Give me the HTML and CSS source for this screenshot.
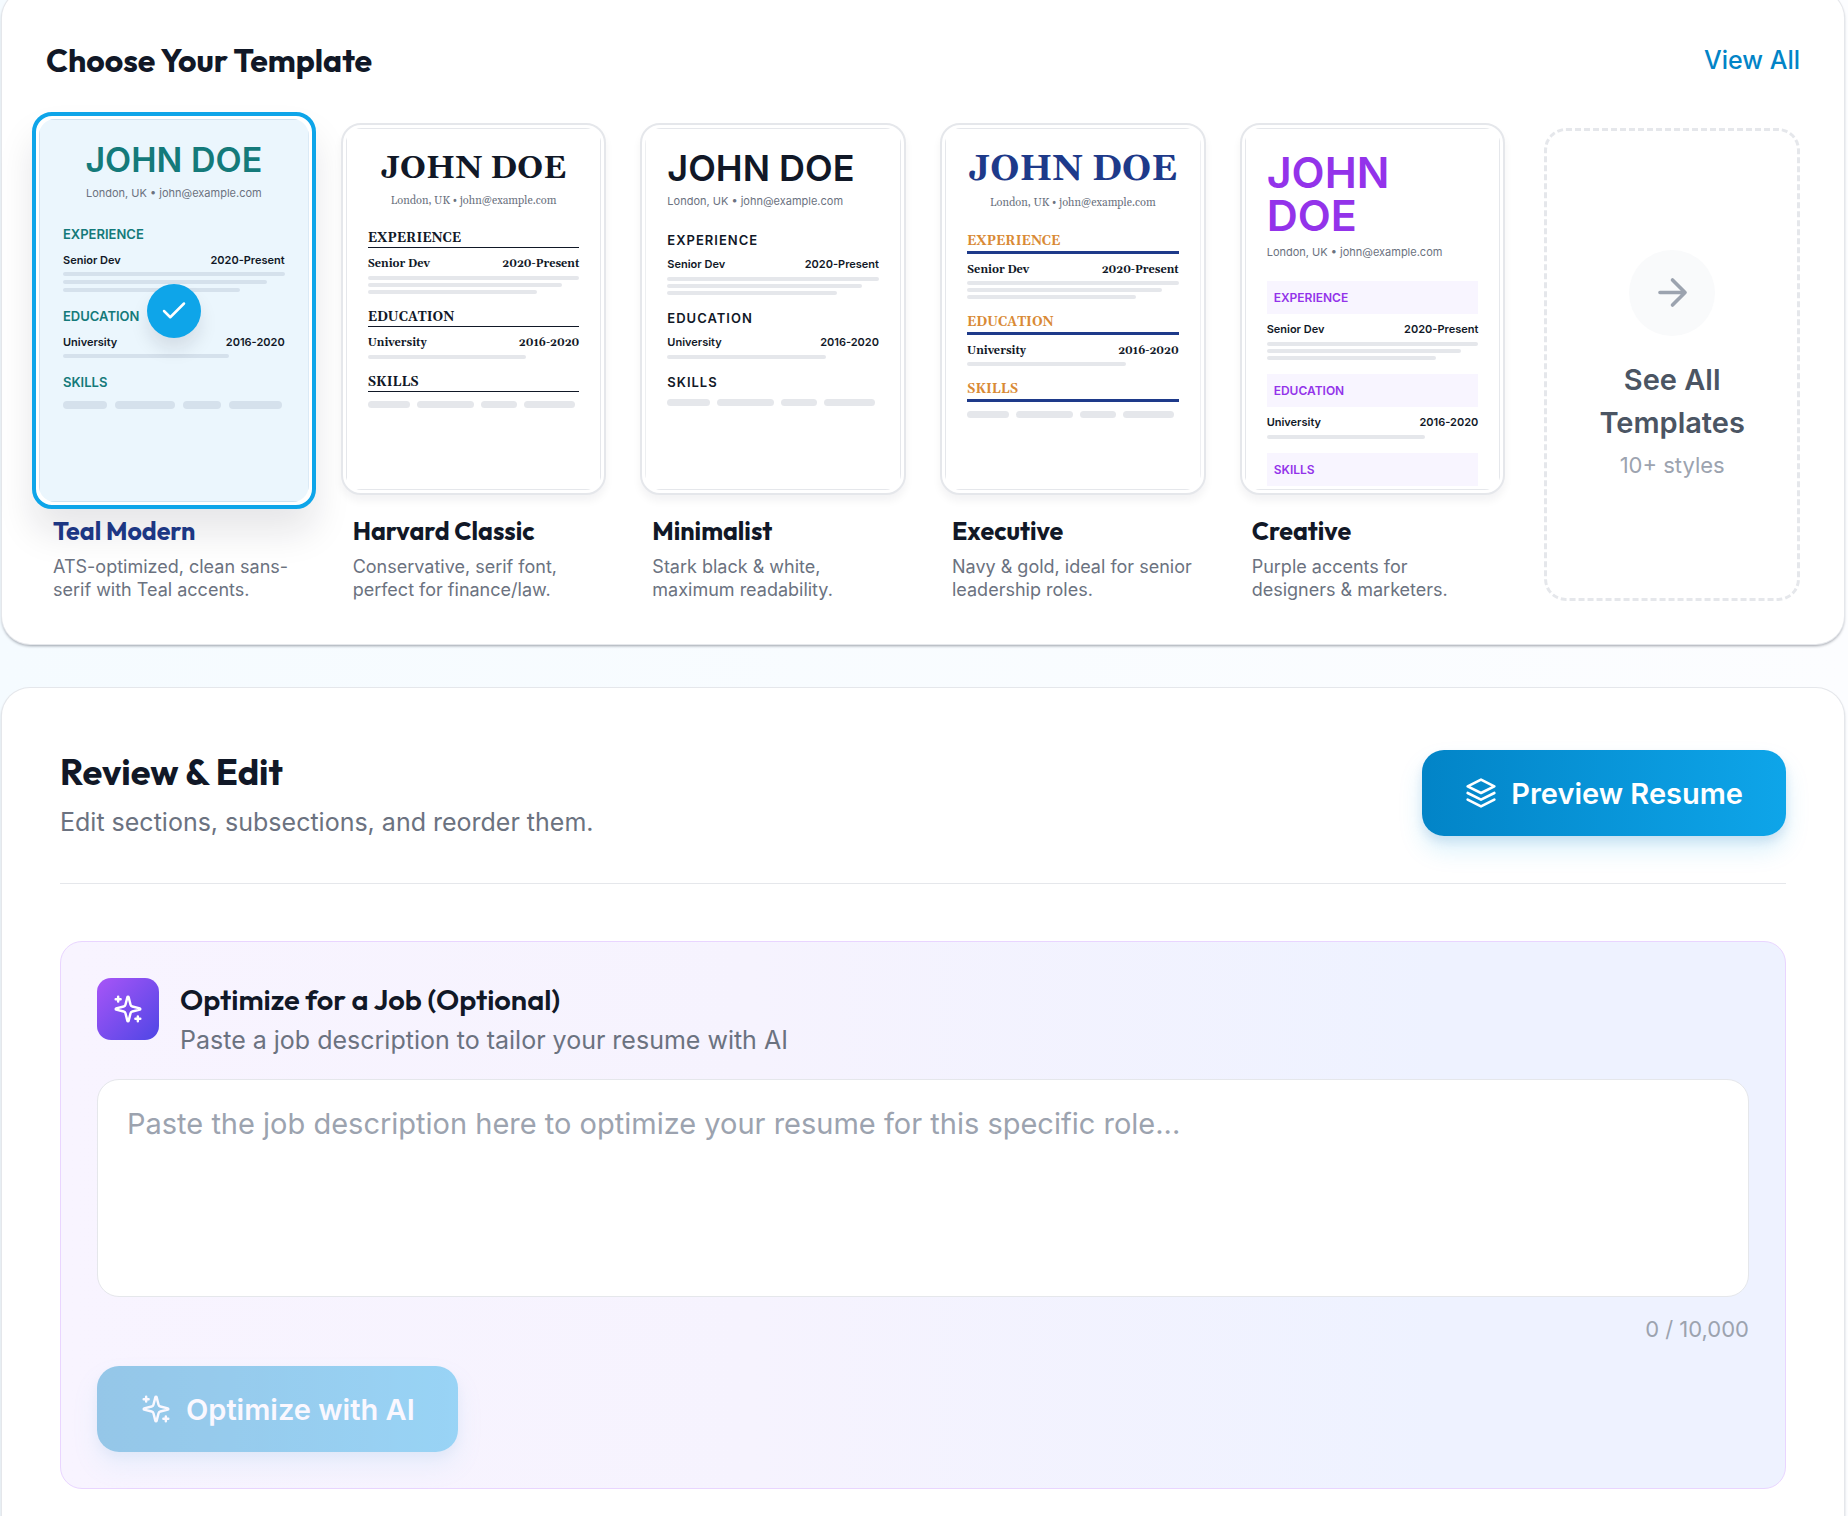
FILE: index.html
```html
<!DOCTYPE html>
<html lang="en">
<head>
<meta charset="utf-8">
<meta name="viewport" content="width=device-width, initial-scale=1">
<title>Resume Builder</title>
<link rel="stylesheet" href="styles.css">
</head>
<body>
<main class="page">
  <section class="panel templates">
    <header class="templates-head">
      <h2 class="templates-title">Choose Your Template</h2>
      <a class="view-all" href="#templates">View All</a>
    </header>
    <div class="template-grid">
      <article class="template template-selected">
        <button class="thumb thumb-teal" type="button" aria-label="Teal Modern" aria-pressed="true">
          <span class="sheet">
            <span class="name">JOHN DOE</span>
            <span class="contact">London, UK • john@example.com</span>
            <span class="label">EXPERIENCE</span>
            <span class="entry"><span>Senior Dev</span><span>2020-Present</span></span>
            <span class="bars"><span class="bar"></span><span class="bar bar-mid"></span><span class="bar bar-short"></span></span>
            <span class="label">EDUCATION</span>
            <span class="entry"><span>University</span><span>2016-2020</span></span>
            <span class="bars"><span class="bar bar-edu"></span></span>
            <span class="label">SKILLS</span>
            <span class="chips"><span class="chip chip-a"></span><span class="chip chip-b"></span><span class="chip chip-c"></span><span class="chip chip-d"></span></span>
          </span>
          <span class="check">
            <svg viewBox="0 0 24 24" width="30" height="30" fill="none" stroke="currentColor" stroke-width="2" stroke-linecap="round" stroke-linejoin="round"><path d="M20 6 9 17l-5-5"/></svg>
          </span>
        </button>
        <h3 class="template-name">Teal Modern</h3>
        <p class="template-desc">ATS-optimized, clean sans-serif with Teal accents.</p>
      </article>

      <article class="template">
        <button class="thumb thumb-harvard" type="button" aria-label="Harvard Classic">
          <span class="sheet">
            <span class="name">JOHN DOE</span>
            <span class="contact">London, UK • john@example.com</span>
            <span class="label">EXPERIENCE</span>
            <span class="entry"><span>Senior Dev</span><span>2020-Present</span></span>
            <span class="bars"><span class="bar"></span><span class="bar bar-mid"></span><span class="bar bar-short"></span></span>
            <span class="label">EDUCATION</span>
            <span class="entry"><span>University</span><span>2016-2020</span></span>
            <span class="bars"><span class="bar bar-edu"></span></span>
            <span class="label">SKILLS</span>
            <span class="chips"><span class="chip chip-a"></span><span class="chip chip-b"></span><span class="chip chip-c"></span><span class="chip chip-d"></span></span>
          </span>
        </button>
        <h3 class="template-name">Harvard Classic</h3>
        <p class="template-desc">Conservative, serif font, perfect for finance/law.</p>
      </article>

      <article class="template">
        <button class="thumb thumb-minimal" type="button" aria-label="Minimalist">
          <span class="sheet">
            <span class="name">JOHN DOE</span>
            <span class="contact">London, UK • john@example.com</span>
            <span class="label">EXPERIENCE</span>
            <span class="entry"><span>Senior Dev</span><span>2020-Present</span></span>
            <span class="bars"><span class="bar"></span><span class="bar bar-mid"></span><span class="bar bar-short"></span></span>
            <span class="label">EDUCATION</span>
            <span class="entry"><span>University</span><span>2016-2020</span></span>
            <span class="bars"><span class="bar bar-edu"></span></span>
            <span class="label">SKILLS</span>
            <span class="chips"><span class="chip chip-a"></span><span class="chip chip-b"></span><span class="chip chip-c"></span><span class="chip chip-d"></span></span>
          </span>
        </button>
        <h3 class="template-name">Minimalist</h3>
        <p class="template-desc">Stark black &amp; white, maximum readability.</p>
      </article>

      <article class="template">
        <button class="thumb thumb-executive" type="button" aria-label="Executive">
          <span class="sheet">
            <span class="name">JOHN DOE</span>
            <span class="contact">London, UK • john@example.com</span>
            <span class="label">EXPERIENCE</span>
            <span class="entry"><span>Senior Dev</span><span>2020-Present</span></span>
            <span class="bars"><span class="bar"></span><span class="bar bar-mid"></span><span class="bar bar-short"></span></span>
            <span class="label">EDUCATION</span>
            <span class="entry"><span>University</span><span>2016-2020</span></span>
            <span class="bars"><span class="bar bar-edu"></span></span>
            <span class="label">SKILLS</span>
            <span class="chips"><span class="chip chip-a"></span><span class="chip chip-b"></span><span class="chip chip-c"></span><span class="chip chip-d"></span></span>
          </span>
        </button>
        <h3 class="template-name">Executive</h3>
        <p class="template-desc">Navy &amp; gold, ideal for senior leadership roles.</p>
      </article>

      <article class="template">
        <button class="thumb thumb-creative" type="button" aria-label="Creative">
          <span class="sheet">
            <span class="name">JOHN<br>DOE</span>
            <span class="contact">London, UK • john@example.com</span>
            <span class="label">EXPERIENCE</span>
            <span class="entry"><span>Senior Dev</span><span>2020-Present</span></span>
            <span class="bars"><span class="bar"></span><span class="bar bar-mid"></span><span class="bar bar-short"></span></span>
            <span class="label">EDUCATION</span>
            <span class="entry"><span>University</span><span>2016-2020</span></span>
            <span class="bars"><span class="bar bar-edu"></span></span>
            <span class="label">SKILLS</span>
          </span>
        </button>
        <h3 class="template-name">Creative</h3>
        <p class="template-desc">Purple accents for designers &amp; marketers.</p>
      </article>

      <button class="see-all" type="button">
        <span class="see-all-icon">
          <svg viewBox="0 0 24 24" width="43" height="43" fill="none" stroke="currentColor" stroke-width="2" stroke-linecap="round" stroke-linejoin="round"><path d="M5 12h14M12 5l7 7-7 7"/></svg>
        </span>
        <span class="see-all-title">See All Templates</span>
        <span class="see-all-note">10+ styles</span>
      </button>
    </div>
  </section>

  <section class="panel review">
    <header class="review-head">
      <div class="review-heading">
        <h2 class="review-title">Review &amp; Edit</h2>
        <p class="review-sub">Edit sections, subsections, and reorder them.</p>
      </div>
      <button class="btn" type="button">
        <svg viewBox="0 0 24 24" width="32" height="32" fill="none" stroke="currentColor" stroke-width="2" stroke-linecap="round" stroke-linejoin="round"><path d="M12 2 2 7l10 5 10-5-10-5z"/><path d="M2 12l10 5 10-5"/><path d="M2 17l10 5 10-5"/></svg>
        Preview Resume
      </button>
    </header>
    <form class="optimize">
      <div class="optimize-head">
        <span class="optimize-icon">
          <svg viewBox="-1 -1 26 26" width="32" height="32" fill="none" stroke="currentColor" stroke-width="2" stroke-linecap="round" stroke-linejoin="round"><path d="M9.94 15.5A2 2 0 0 0 8.5 14.06l-6.14-1.58a.5.5 0 0 1 0-.96L8.5 9.94A2 2 0 0 0 9.94 8.5l1.58-6.14a.5.5 0 0 1 .96 0l1.58 6.14a2 2 0 0 0 1.44 1.44l6.14 1.58a.5.5 0 0 1 0 .96l-6.14 1.58a2 2 0 0 0-1.44 1.44l-1.58 6.14a.5.5 0 0 1-.96 0z"/><path d="M20 18v4M22 20h-4M4 2v4M2 4h4"/></svg>
        </span>
        <div>
          <h3 class="optimize-title"><label for="job">Optimize for a Job (Optional)</label></h3>
          <p class="optimize-sub">Paste a job description to tailor your resume with AI</p>
        </div>
      </div>
      <textarea class="job" id="job" maxlength="10000" placeholder="Paste the job description here to optimize your resume for this specific role..."></textarea>
      <p class="counter">0 / 10,000</p>
      <button class="btn" type="button" disabled>
        <svg viewBox="-1 -1 26 26" width="32" height="32" fill="none" stroke="currentColor" stroke-width="2" stroke-linecap="round" stroke-linejoin="round"><path d="M9.94 15.5A2 2 0 0 0 8.5 14.06l-6.14-1.58a.5.5 0 0 1 0-.96L8.5 9.94A2 2 0 0 0 9.94 8.5l1.58-6.14a.5.5 0 0 1 .96 0l1.58 6.14a2 2 0 0 0 1.44 1.44l6.14 1.58a.5.5 0 0 1 0 .96l-6.14 1.58a2 2 0 0 0-1.44 1.44l-1.58 6.14a.5.5 0 0 1-.96 0z"/><path d="M20 18v4M22 20h-4M4 2v4M2 4h4"/></svg>
        Optimize with AI
      </button>
    </form>
  </section>
</main>
</body>
</html>
```
FILE: styles.css
```css
* {
  box-sizing: border-box;
}

body {
  margin: 0;
  min-height: 100vh;
  font-family: Inter, "Liberation Sans", sans-serif;
  color: #111827;
  background: linear-gradient(90deg, #f5fbff, #fcfdff);
  overflow-x: hidden;
}

h2, h3, p {
  margin: 0;
}

button {
  font: inherit;
  cursor: pointer;
}

.page {
  display: flex;
  flex-direction: column;
  gap: 44px;
  padding: 0 4px 0 2px;
}

.panel {
  background: #fff;
  border-radius: 28px;
  box-shadow: 0 0 0 1px #e5e7eb, 0 2px 3px rgba(17, 24, 39, 0.4);
}

/* Template picker */
.templates {
  margin-top: -10px;
  padding: 45px 39px 43px;
}

.templates-head {
  display: flex;
  align-items: center;
  justify-content: space-between;
  padding: 0 5px;
  margin-bottom: 38px;
}

.templates-title,
.template-name,
.review-title,
.optimize-title {
  font-family: Outfit, Lato, "Open Sans", sans-serif;
  font-weight: 700;
}

.templates-title {
  font-size: 32px;
  line-height: 50px;
}

.view-all {
  font-size: 25px;
  font-weight: 500;
  line-height: 50px;
  color: #0284c7;
  text-decoration: none;
}

.template-grid {
  display: grid;
  grid-template-columns: repeat(6, minmax(0, 1fr));
  gap: 34px;
}

.template {
  display: flex;
  flex-direction: column;
}

.thumb {
  position: relative;
  display: block;
  width: 100%;
  height: 372px;
  padding: 3px;
  border: 2px solid #e5e7eb;
  border-radius: 20px;
  background: #fff;
  box-shadow: 0 6px 8px rgba(17, 24, 39, 0.05);
  text-align: left;
  color: #111827;
}

.sheet {
  display: flex;
  flex-direction: column;
  height: 100%;
  padding: 19px 21px 0;
  border: 1px solid #e5e7eb;
  clip-path: inset(0 round 16px);
  overflow: hidden;
  font-size: 11px;
}

.name {
  flex: none;
  font-size: 36px;
  font-weight: 600;
  line-height: 40px;
  white-space: nowrap;
}

.contact {
  flex: none;
  font-size: 11px;
  line-height: 14px;
  color: #6b7280;
  white-space: nowrap;
}

.label {
  flex: none;
  font-size: 12px;
  font-weight: 600;
  line-height: 16px;
}

.entry {
  flex: none;
  display: flex;
  justify-content: space-between;
  font-size: 11px;
  font-weight: 600;
  line-height: 14px;
  white-space: nowrap;
}

.bars {
  flex: none;
  display: grid;
  gap: 3px;
}

.bar {
  height: 4px;
  border-radius: 2px;
  background: #e5e7eb;
}

.bar-mid { width: 92%; }
.bar-short { width: 80%; }
.bar-edu { width: 75%; }

.chips {
  flex: none;
  display: flex;
  gap: 7px;
}

.chip {
  height: 7px;
  border-radius: 4px;
  background: #e5e7eb;
}

.chip-a { width: 20%; }
.chip-b { width: 27%; }
.chip-c { width: 17%; }
.chip-d { width: 24%; }

/* Teal Modern, shown selected */
.template-selected .thumb {
  width: auto;
  height: 397px;
  margin: -11px -9px -14px;
  border: 4px solid #0ea5e9;
  box-shadow: 0 24px 36px rgba(17, 24, 39, 0.1);
}

.template-selected .sheet {
  padding: 20px 23px 0;
  border-color: #cfe2f1;
  background: #ebf6fd;
}

.template-selected .bars {
  gap: 4px;
}

.template-selected .bar,
.template-selected .chip {
  background: #d5e1ec;
}

.template-selected .chips {
  gap: 8px;
}

.template-selected .chip {
  height: 8px;
}

.template-selected .template-name {
  color: #1e3a8a;
}

.thumb-teal .name {
  font-size: 34px;
  color: #147a7a;
  text-align: center;
}

.thumb-teal .contact {
  margin: 6px 0 26px;
  text-align: center;
}

.thumb-teal .label {
  margin-bottom: 11px;
  font-size: 13px;
  color: #147a7a;
}

.thumb-teal .bars {
  margin: 5px 0 16px;
}

.check {
  position: absolute;
  top: 50%;
  left: 50%;
  display: grid;
  place-items: center;
  width: 54px;
  height: 54px;
  margin: -27px 0 0 -27px;
  border-radius: 50%;
  background: #0ea5e9;
  color: #fff;
  box-shadow: 0 12px 18px rgba(17, 24, 39, 0.1);
}

/* Harvard Classic */
.thumb-harvard,
.thumb-executive {
  font-family: Gelasio, Georgia, "Liberation Serif", serif;
}

.thumb-harvard .name {
  margin-top: 1px;
  font-size: 32px;
  font-weight: 700;
  text-align: center;
}

.thumb-harvard .contact,
.thumb-executive .contact {
  margin: 5px 0 23px;
  font-size: 11px;
  text-align: center;
}

.thumb-harvard .label,
.thumb-executive .label {
  margin-bottom: 9px;
  padding-bottom: 2px;
  border-bottom: 1px solid #111827;
  font-size: 13px;
  font-weight: 700;
  line-height: 14px;
}

.thumb-harvard .entry,
.thumb-executive .entry {
  font-size: 11px;
  font-weight: 700;
}

.thumb-harvard .bars {
  margin: 5px 0 16px;
}

/* Minimalist */
.thumb-minimal .contact {
  margin: 6px 0 24px;
}

.thumb-minimal .label {
  margin-bottom: 9px;
  font-size: 13px;
  letter-spacing: 1px;
}

.thumb-minimal .bars {
  margin: 6px 0 15px;
}

/* Executive */
.thumb-executive .name {
  margin-top: 1px;
  font-weight: 700;
  line-height: 42px;
  color: #1e3a8a;
  text-align: center;
}

.thumb-executive .label {
  border-bottom: 3px solid #1e3a8a;
  line-height: 16px;
  color: #d98a35;
}

.thumb-executive .bars {
  margin: 4px 0 15px;
}

/* Creative */
.thumb-creative .name {
  margin-top: 3px;
  font-size: 43px;
  line-height: 43px;
  color: #9333ea;
}

.thumb-creative .contact {
  margin: 8px 0 22px;
}

.thumb-creative .label {
  margin-bottom: 8px;
  padding: 0 7px;
  line-height: 33px;
  background: #f8f5ff;
  color: #9333ea;
}

.thumb-creative .bars {
  margin: 6px 0 14px;
}

.template-name {
  margin-top: 20px;
  padding: 0 12px;
  font-size: 25px;
  line-height: 32px;
}

.template-desc {
  margin-top: 8px;
  padding: 0 12px;
  font-size: 18px;
  line-height: 23px;
  color: #6b7280;
}

.see-all {
  display: flex;
  flex-direction: column;
  align-items: center;
  justify-content: center;
  margin: 5px 5px 0;
  padding: 7px 40px 0;
  border: 3px dashed #e5e7eb;
  border-radius: 22px;
  background: none;
}

.see-all-icon {
  display: grid;
  place-items: center;
  width: 86px;
  height: 86px;
  margin-bottom: 22px;
  border-radius: 50%;
  background: #f9fafb;
  color: #9ca3af;
}

.see-all-title {
  font-size: 29px;
  font-weight: 600;
  line-height: 43px;
  color: #4b5563;
}

.see-all-note {
  font-size: 22px;
  line-height: 43px;
  color: #9ca3af;
}

/* Review and edit */
.review {
  padding: 62px 58px 64px;
}

.review-head {
  display: flex;
  align-items: flex-start;
  justify-content: space-between;
  padding-bottom: 43px;
  margin-bottom: 57px;
  border-bottom: 1px solid #e5e7eb;
}

.review-title {
  font-size: 36px;
  line-height: 44px;
}

.review-sub {
  margin-top: 10px;
  font-size: 25px;
  line-height: 36px;
  color: #6b7280;
}

.btn {
  display: inline-flex;
  align-items: center;
  gap: 14px;
  height: 86px;
  padding: 0 43px;
  border: 0;
  border-radius: 22px;
  background: linear-gradient(90deg, #0284c7, #0ea5e9);
  box-shadow: 0 14px 24px rgba(14, 165, 233, 0.15), 0 6px 10px rgba(30, 80, 160, 0.12);
  color: #fff;
  font-size: 29px;
  font-weight: 600;
  white-space: nowrap;
}

.btn:disabled {
  opacity: 0.4;
  cursor: not-allowed;
}

.optimize {
  display: flex;
  flex-direction: column;
  align-items: flex-start;
  padding: 36px;
  border: 1px solid #e9d5ff;
  border-radius: 22px;
  background: linear-gradient(90deg, #f8f4ff, #f6f3fe 40%, #eef2ff 80%);
}

.optimize-head {
  display: flex;
  gap: 21px;
  margin-bottom: 21px;
}

.optimize-icon {
  display: grid;
  place-items: center;
  flex: none;
  width: 62px;
  height: 62px;
  border-radius: 14px;
  background: linear-gradient(135deg, #a855f7, #4f46e5);
  color: #fff;
}

.optimize-title {
  font-size: 29px;
  font-weight: 600;
  line-height: 44px;
}

.optimize-sub {
  font-size: 25px;
  line-height: 36px;
  color: #6b7280;
}

.job {
  width: 100%;
  height: 218px;
  padding: 22px 29px;
  border: 1px solid #e5e7eb;
  border-radius: 22px;
  background: #fff;
  font: 29px/43px Inter, "Liberation Sans", sans-serif;
  color: #111827;
  resize: none;
}

.job::placeholder {
  color: #9ca3af;
  opacity: 1;
}

.counter {
  align-self: flex-end;
  margin: 14px 0 19px;
  font-size: 22px;
  line-height: 36px;
  color: #9ca3af;
}
```
